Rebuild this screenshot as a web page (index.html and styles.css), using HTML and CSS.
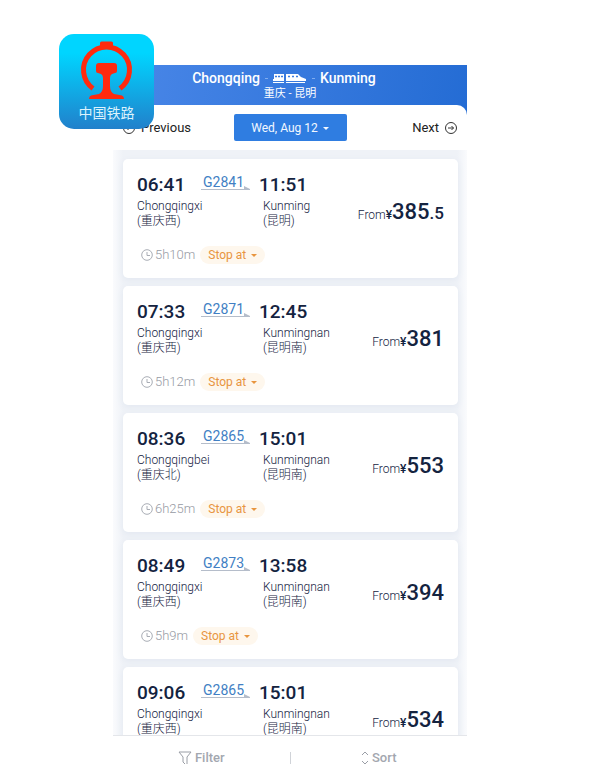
FILE: index.html
```
<!DOCTYPE html>
<html lang="en">

<head>
    <meta charset="UTF-8">
    <title>Chongqing - Kunming</title>
    <link rel="stylesheet" href="styles.css">
</head>

<body>

    <div class="app-icon">
        <svg viewBox="0 0 95 95" aria-hidden="true">
            <path d="M34 54.500A23 23 0 1 1 61 54.500" fill="none" stroke="#ff2a0e" stroke-width="5" />
            <rect x="41" y="7.500" width="13" height="7" rx="1.500" fill="#ff2a0e" />
            <path d="M40 29H55Q58 29 58 32V37Q58 39 56 39L53 40Q51 41 51 44V52Q51 58 55 60L63 61.500Q65 62 65 65H30Q30 62 32 61.500L40 60Q44 58 44 52V44Q44 41 42 40L39 39Q37 39 37 37V32Q37 29 40 29Z" fill="#ff2a0e" />
        </svg>
        <span class="app-icon-name">中国铁路</span>
    </div>

    <div class="phone">
        <header class="header">
            <h1 class="route">
                <span class="route-from">Chongqing</span>
                <span class="dash"></span>
                <svg class="route-train" viewBox="0 0 34 12" aria-hidden="true">
                    <path d="M1 2H11V9H0V7H1ZM13 2H25L28 5L33 7V9H13Z" fill="#fff" />
                    <path d="M2 4.500H4M5 4.500H7M8 4.500H10M15 4.500H17M19 4.500H21M23 4.500H25" stroke="#3d7ce0" stroke-width="1.500" />
                    <path d="M0 10.500H11M13 10.500H32" stroke="#fff" />
                </svg>
                <span class="dash"></span>
                <span class="route-to">Kunming</span>
            </h1>
            <div class="route-cn">重庆 - 昆明</div>
        </header>

        <nav class="date-bar">
            <button class="day-link">
                <svg viewBox="0 0 12 12"><circle cx="6" cy="6" r="5.500" /><path d="M9 6H3.500M5.500 4L3.500 6L5.500 8" /></svg>
                Previous
            </button>
            <button class="date-button">Wed, Aug 12 <span class="caret"></span></button>
            <button class="day-link day-next">
                Next
                <svg viewBox="0 0 12 12"><circle cx="6" cy="6" r="5.500" /><path d="M3 6H8.500M6.500 4L8.500 6L6.500 8" /></svg>
            </button>
        </nav>

        <main class="trains">
            <article class="card">
                <div class="card-top">
                    <div class="trip">
                        <div class="time">06:41</div>
                        <div class="train-no">G2841</div>
                        <div class="time">11:51</div>
                        <div class="station">Chongqingxi<br>(重庆西)</div>
                        <div class="station station-to">Kunming<br>(昆明)</div>
                    </div>
                    <div class="price">From<b>¥</b><strong>385</strong><b class="decimal">.5</b></div>
                </div>
                <div class="card-bottom">
                    <svg class="clock" viewBox="0 0 12 12"><circle cx="6" cy="6" r="5.300" /><path d="M6 3V6.500H9" /></svg>
                    <span class="duration">5h10m</span>
                    <button class="stops">Stop at <span class="caret"></span></button>
                </div>
            </article>

            <article class="card">
                <div class="card-top">
                    <div class="trip">
                        <div class="time">07:33</div>
                        <div class="train-no">G2871</div>
                        <div class="time">12:45</div>
                        <div class="station">Chongqingxi<br>(重庆西)</div>
                        <div class="station station-to">Kunmingnan<br>(昆明南)</div>
                    </div>
                    <div class="price">From<b>¥</b><strong>381</strong></div>
                </div>
                <div class="card-bottom">
                    <svg class="clock" viewBox="0 0 12 12"><circle cx="6" cy="6" r="5.300" /><path d="M6 3V6.500H9" /></svg>
                    <span class="duration">5h12m</span>
                    <button class="stops">Stop at <span class="caret"></span></button>
                </div>
            </article>

            <article class="card">
                <div class="card-top">
                    <div class="trip">
                        <div class="time">08:36</div>
                        <div class="train-no">G2865</div>
                        <div class="time">15:01</div>
                        <div class="station">Chongqingbei<br>(重庆北)</div>
                        <div class="station station-to">Kunmingnan<br>(昆明南)</div>
                    </div>
                    <div class="price">From<b>¥</b><strong>553</strong></div>
                </div>
                <div class="card-bottom">
                    <svg class="clock" viewBox="0 0 12 12"><circle cx="6" cy="6" r="5.300" /><path d="M6 3V6.500H9" /></svg>
                    <span class="duration">6h25m</span>
                    <button class="stops">Stop at <span class="caret"></span></button>
                </div>
            </article>

            <article class="card">
                <div class="card-top">
                    <div class="trip">
                        <div class="time">08:49</div>
                        <div class="train-no">G2873</div>
                        <div class="time">13:58</div>
                        <div class="station">Chongqingxi<br>(重庆西)</div>
                        <div class="station station-to">Kunmingnan<br>(昆明南)</div>
                    </div>
                    <div class="price">From<b>¥</b><strong>394</strong></div>
                </div>
                <div class="card-bottom">
                    <svg class="clock" viewBox="0 0 12 12"><circle cx="6" cy="6" r="5.300" /><path d="M6 3V6.500H9" /></svg>
                    <span class="duration">5h9m</span>
                    <button class="stops">Stop at <span class="caret"></span></button>
                </div>
            </article>

            <article class="card">
                <div class="card-top">
                    <div class="trip">
                        <div class="time">09:06</div>
                        <div class="train-no">G2865</div>
                        <div class="time">15:01</div>
                        <div class="station">Chongqingxi<br>(重庆西)</div>
                        <div class="station station-to">Kunmingnan<br>(昆明南)</div>
                    </div>
                    <div class="price">From<b>¥</b><strong>534</strong></div>
                </div>
            </article>
        </main>

        <footer class="toolbar">
            <button class="tool">
                <svg viewBox="0 0 14 14"><path d="M1 1H13L9 6V13M1 1L5 6V11L7 13" /></svg>
                Filter
            </button>
            <span class="divider"></span>
            <button class="tool">
                <svg class="sort-icon" viewBox="0 0 8 14"><path d="M1 4L4 1L7 4M1 10L4 13L7 10" /></svg>
                Sort
            </button>
        </footer>
    </div>

</body>

</html>
```
FILE: styles.css
```
* {
    box-sizing: border-box;
}

body {
    margin: 0;
    height: 100vh;
    padding: 65px 148px 0 113px;
    background-color: #fff;
    font-family: Roboto, "Noto Sans CJK SC", sans-serif;
    color: #14233f;
}

button {
    border: none;
    padding: 0;
    background: none;
    font-family: inherit;
    color: inherit;
    cursor: pointer;
}

svg {
    fill: none;
    stroke-linejoin: round;
}

/* app logo over the corner of the screen */
.app-icon {
    position: absolute;
    top: 34px;
    left: 59px;
    width: 95px;
    height: 95px;
    border-radius: 15px;
    background: linear-gradient(#00d5ff 20%, #2180cb);
    overflow: hidden;
    z-index: 1;
}

.app-icon svg {
    display: block;
}

.app-icon-name {
    position: absolute;
    bottom: 6px;
    width: 100%;
    text-align: center;
    font-size: 14px;
    line-height: 20px;
    color: #dcf3fd;
}

.phone {
    height: 100%;
    display: flex;
    flex-direction: column;
    background: linear-gradient(100deg, #4a87e8, #246cd4) top / 100% 60px no-repeat;
}

.header {
    padding: 5px 0 3px;
    color: #fff;
    text-align: center;
}

.route {
    margin: 0;
    display: grid;
    grid-template-columns: 1fr 3px 34px 3px 1fr;
    gap: 5px;
    align-items: center;
    font-size: 14px;
    font-weight: 500;
    line-height: 16px;
}

.route-from {
    text-align: right;
}

.route-to {
    text-align: left;
}

.dash {
    height: 1px;
    background-color: #7facf0;
}

.route-cn {
    font-size: 11px;
    line-height: 16px;
}

.date-bar {
    display: grid;
    grid-template-columns: 1fr 113px 1fr;
    align-items: center;
    height: 45px;
    padding: 0 10px;
    border-radius: 0 10px 0 0;
    background-color: #fff;
    flex: none;
}

.day-link {
    display: flex;
    align-items: center;
    gap: 6px;
    font-size: 13px;
    line-height: 18px;
    color: #222;
}

.day-link svg {
    width: 12px;
    height: 12px;
    stroke: #333;
}

.day-next {
    justify-self: end;
}

.date-button {
    height: 27px;
    border-radius: 2px;
    background-color: #2f7de1;
    color: #f2f8ff;
    font-size: 12px;
}

.caret {
    display: inline-block;
    margin-left: 2px;
    vertical-align: middle;
    border: 3px solid transparent;
    border-top-color: currentColor;
    border-bottom: none;
}

.trains {
    flex: 1;
    min-height: 0;
    display: flex;
    flex-direction: column;
    gap: 8px;
    padding: 9px 9px 0 10px;
    background: linear-gradient(90deg, #fafbfd, #eff2f7 10px, #eff2f7 calc(100% - 10px), #fafbfd);
    overflow-y: auto;
    scrollbar-width: none;
}

.card {
    flex: none;
    padding: 14px;
    border-radius: 5px;
    background-color: #fff;
    box-shadow: 0 2px 6px #e3e8f1;
}

.card-top {
    display: flex;
    justify-content: space-between;
    align-items: flex-end;
}

.trip {
    display: grid;
    grid-template-columns: 64px 58px auto;
    row-gap: 2px;
}

.time {
    font-size: 19px;
    font-weight: 500;
    line-height: 24px;
    color: #14233f;
}

.train-no {
    position: relative;
    width: 49px;
    height: 17px;
    padding-left: 2px;
    border-bottom: 1px solid #b5bdca;
    font-size: 14px;
    line-height: 18px;
    color: #417fc4;
}

.train-no::after {
    content: "";
    position: absolute;
    right: 0;
    bottom: 0;
    border-left: 6px solid #b5bdca;
    border-top: 3px solid transparent;
}

.station {
    grid-column: span 2;
    font-size: 12px;
    font-weight: 300;
    line-height: 15px;
    white-space: nowrap;
}

.station-to {
    grid-column: 3;
    padding-left: 4px;
}

.price {
    padding-bottom: 2px;
    font-size: 12px;
    font-weight: 300;
    line-height: 24px;
    white-space: nowrap;
}

.price b {
    font-weight: 500;
}

.price strong {
    font-size: 22px;
    font-weight: 500;
}

.price .decimal {
    font-size: 17px;
}

.card-bottom {
    display: flex;
    align-items: center;
    margin-top: 17px;
    padding-left: 4px;
}

.clock {
    width: 12px;
    height: 12px;
    margin-right: 2px;
    stroke: #a9adb5;
}

.duration {
    margin-right: 5px;
    font-size: 13px;
    font-weight: 300;
    line-height: 18px;
    color: #969aa3;
}

.stops {
    height: 18px;
    padding: 0 8px;
    border-radius: 9px;
    background-color: #fef7ed;
    font-size: 12px;
    color: #e8953f;
}

.toolbar {
    flex: none;
    display: grid;
    grid-template-columns: 1fr 1px 1fr;
    align-items: center;
    padding: 13px 0 2px;
    border-top: 1px solid #e4e6ea;
    background-color: #fff;
}

.tool {
    display: flex;
    justify-content: center;
    align-items: center;
    gap: 3px;
    font-size: 13px;
    font-weight: 500;
    line-height: 18px;
    color: #a3a7af;
}

.tool svg {
    width: 14px;
    height: 14px;
    stroke: #9a9ea6;
}

.tool .sort-icon {
    width: 8px;
}

.divider {
    height: 12px;
    background-color: #d0d3d8;
}
```
